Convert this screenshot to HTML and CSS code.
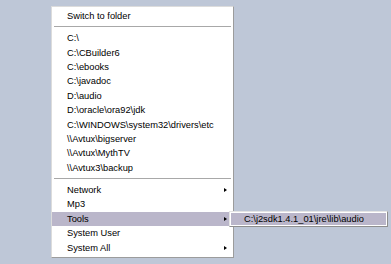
FILE: index.html
```html
<!DOCTYPE html>
<html>
<head>
<meta charset="utf-8">
<link rel="stylesheet" href="styles.css">
</head>
<body>
<div class="menu">
  <div class="item">Switch to folder</div>
  <div class="sep"></div>
  <div class="item">C:\</div>
  <div class="item">C:\CBuilder6</div>
  <div class="item">C:\ebooks</div>
  <div class="item">C:\javadoc</div>
  <div class="item">D:\audio</div>
  <div class="item">D:\oracle\ora92\jdk</div>
  <div class="item">C:\WINDOWS\system32\drivers\etc</div>
  <div class="item">\\Avtux\bigserver</div>
  <div class="item">\\Avtux\MythTV</div>
  <div class="item">\\Avtux3\backup</div>
  <div class="sep"></div>
  <div class="item sub">Network<span class="arrow"></span></div>
  <div class="item">Mp3</div>
  <div class="item sub active">Tools<span class="arrow"></span>
    <div class="submenu"><div class="subitem">C:\j2sdk1.4.1_01\jre\lib\audio</div></div>
  </div>
  <div class="item">System User</div>
  <div class="item sub">System All<span class="arrow"></span></div>
</div>
</body>
</html>
```
FILE: styles.css
```css
html, body {
  margin: 0;
  padding: 0;
  background: #bec7d7;
  height: 100%;
}
body {
  font-family: "Liberation Sans", Arial, sans-serif;
  font-size: 9.3px;
  color: #000;
  padding-top: 6px;
  padding-left: 51px;
  box-sizing: border-box;
}
.menu {
  width: 183px;
  box-sizing: border-box;
  background: #fff;
  border-top: 1px solid #dcdcdc;
  border-left: 1px solid #dcdcdc;
  border-right: 1px solid #9c9c9c;
  border-bottom: 1px solid #9c9c9c;
  padding: 1.8px 0 2px;
}
.item {
  position: relative;
  height: 14.4px;
  line-height: 14.4px;
  padding-left: 15px;
  white-space: nowrap;
}
.item.active {
  background: #bab6ca;
}
.sep {
  height: 1px;
  background: #a8a8a8;
  margin: 2.5px 2px 4.5px;
}
.arrow {
  position: absolute;
  right: 6px;
  top: 5px;
  width: 0;
  height: 0;
  border-top: 2.5px solid transparent;
  border-bottom: 2.5px solid transparent;
  border-left: 3px solid #000;
}
.submenu {
  position: absolute;
  left: 177px;
  top: -1px;
  width: 159px;
  height: 16px;
  box-sizing: border-box;
  border-top: 1px solid #e4e4e4;
  border-left: 1px solid #e4e4e4;
  border-right: 1px solid #8e8e8e;
  border-bottom: 1px solid #8e8e8e;
  background: #fff;
  padding: 1px;
}
.subitem {
  background: #bab6ca;
  height: 12px;
  line-height: 12px;
  padding-left: 13px;
  white-space: nowrap;
}
```
